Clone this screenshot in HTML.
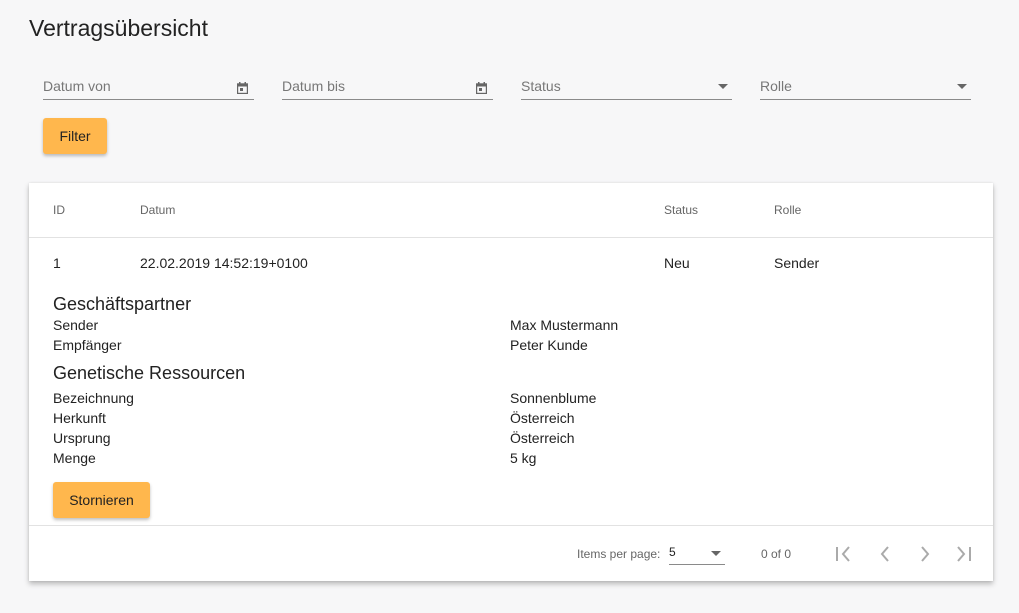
<!DOCTYPE html>
<html><head><meta charset="utf-8"><style>
*{box-sizing:border-box;margin:0;padding:0}
body{width:1019px;height:613px;background:#f7f7f8;font-family:"Liberation Sans",sans-serif;color:#222;position:relative;overflow:hidden}
.a{position:absolute;white-space:nowrap}
h1{position:absolute;left:29px;top:15px;font-size:23px;font-weight:400;color:#222}
.field{position:absolute;top:78px;height:22px;border-bottom:1px solid #8a8a8a;color:#777;font-size:14px}
.btn{position:absolute;background:#ffb74d;border-radius:3px;box-shadow:0 2px 3px rgba(0,0,0,.25);font-size:14px;color:#222;text-align:center}
.card{position:absolute;left:29px;top:183px;width:964px;height:398px;background:#fff;box-shadow:0 3px 5px rgba(0,0,0,.25),0 0 2px rgba(0,0,0,.1)}
.card .a{font-size:14px}
.th{color:#666;font-size:12px!important}
</style></head><body>
<h1>Vertragsübersicht</h1>
<div class="field" style="left:43px;width:211px"><span style="position:absolute;top:0">Datum von</span>
<svg style="position:absolute;right:6px;top:4px" width="11" height="12" viewBox="0 0 11 12"><rect x="0.5" y="2" width="10" height="9.5" fill="none" stroke="#666" stroke-width="1.4"/><rect x="0.5" y="2" width="10" height="2.5" fill="#666"/><rect x="2" y="0" width="1.5" height="3" fill="#666"/><rect x="7.5" y="0" width="1.5" height="3" fill="#666"/><rect x="3" y="6" width="3" height="3" fill="#666"/></svg></div>
<div class="field" style="left:282px;width:211px"><span style="position:absolute;top:0">Datum bis</span>
<svg style="position:absolute;right:6px;top:4px" width="11" height="12" viewBox="0 0 11 12"><rect x="0.5" y="2" width="10" height="9.5" fill="none" stroke="#666" stroke-width="1.4"/><rect x="0.5" y="2" width="10" height="2.5" fill="#666"/><rect x="2" y="0" width="1.5" height="3" fill="#666"/><rect x="7.5" y="0" width="1.5" height="3" fill="#666"/><rect x="3" y="6" width="3" height="3" fill="#666"/></svg></div>
<div class="field" style="left:521px;width:211px"><span style="position:absolute;top:0">Status</span>
<svg style="position:absolute;right:4px;top:6px" width="10" height="5"><path d="M0 0L10 0L5 5Z" fill="#666"/></svg></div>
<div class="field" style="left:760px;width:211px"><span style="position:absolute;top:0">Rolle</span>
<svg style="position:absolute;right:4px;top:6px" width="10" height="5"><path d="M0 0L10 0L5 5Z" fill="#666"/></svg></div>
<div class="btn" style="left:43px;top:118px;width:64px;height:36px;line-height:36px">Filter</div>
<div class="card">
<div class="a th" style="left:24px;top:20px">ID</div>
<div class="a th" style="left:111px;top:20px">Datum</div>
<div class="a th" style="left:635px;top:20px">Status</div>
<div class="a th" style="left:745px;top:20px">Rolle</div>
<div style="position:absolute;left:0;right:0;top:54px;border-top:1px solid #e2e2e2"></div>
<div class="a" style="left:24px;top:72px">1</div>
<div class="a" style="left:111px;top:72px">22.02.2019 14:52:19+0100</div>
<div class="a" style="left:635px;top:72px">Neu</div>
<div class="a" style="left:745px;top:72px">Sender</div>
<div class="a" style="left:24px;top:111px;font-size:18px">Geschäftspartner</div>
<div class="a" style="left:24px;top:134px">Sender</div><div class="a" style="left:481px;top:134px">Max Mustermann</div>
<div class="a" style="left:24px;top:154px">Empfänger</div><div class="a" style="left:481px;top:154px">Peter Kunde</div>
<div class="a" style="left:24px;top:180px;font-size:18px">Genetische Ressourcen</div>
<div class="a" style="left:24px;top:207px">Bezeichnung</div><div class="a" style="left:481px;top:207px">Sonnenblume</div>
<div class="a" style="left:24px;top:227px">Herkunft</div><div class="a" style="left:481px;top:227px">Österreich</div>
<div class="a" style="left:24px;top:247px">Ursprung</div><div class="a" style="left:481px;top:247px">Österreich</div>
<div class="a" style="left:24px;top:267px">Menge</div><div class="a" style="left:481px;top:267px">5 kg</div>
<div class="btn" style="left:24px;top:299px;width:97px;height:36px;line-height:36px">Stornieren</div>
<div style="position:absolute;left:0;right:0;top:342px;border-top:1px solid #e2e2e2"></div>
<div class="a" style="left:548px;top:364px;font-size:12px;color:#666">Items per page:</div>
<div style="position:absolute;left:640px;top:362px;width:56px;height:20px;border-bottom:1px solid #8a8a8a;font-size:12px">5
<svg style="position:absolute;right:4px;top:6px" width="10" height="5"><path d="M0 0L10 0L5 5Z" fill="#666"/></svg></div>
<div class="a" style="left:732px;top:364px;font-size:12px;color:#666">0 of 0</div>
<svg style="position:absolute;left:805px;top:362px" width="140" height="18" viewBox="0 0 140 18" fill="none" stroke="#aaa" stroke-width="2">
<path d="M3 2V16M15 2L9 9L15 16"/><path d="M54 2L48 9L54 16"/><path d="M88 2L94 9L88 16"/><path d="M124 2L130 9L124 16M136 2V16"/></svg>
</div>
</body></html>
